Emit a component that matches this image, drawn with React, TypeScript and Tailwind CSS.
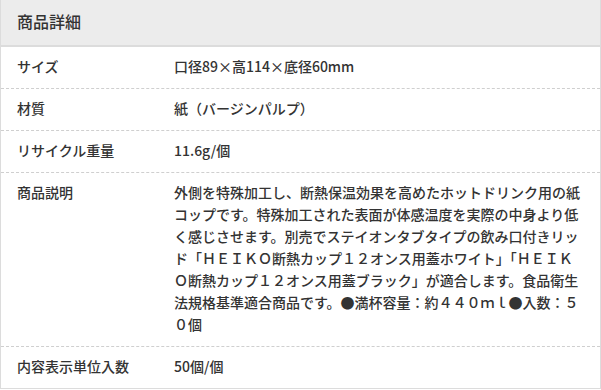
const rows: { label: string; value: string }[] = [
  { label: "サイズ", value: "口径89×高114×底径60mm" },
  { label: "材質", value: "紙（バージンパルプ）" },
  { label: "リサイクル重量", value: "11.6g/個" },
  {
    label: "商品説明",
    value:
      "外側を特殊加工し、断熱保温効果を高めたホットドリンク用の紙コップです。特殊加工された表面が体感温度を実際の中身より低く感じさせます。別売でステイオンタブタイプの飲み口付きリッド「ＨＥＩＫＯ断熱カップ１２オンス用蓋ホワイト」「ＨＥＩＫＯ断熱カップ１２オンス用蓋ブラック」が適合します。食品衛生法規格基準適合商品です。●満杯容量：約４４０ｍｌ●入数：５０個",
  },
  { label: "内容表示単位入数", value: "50個/個" },
]

export default function App() {
  return (
    <div className="w-[601px] bg-white font-['Noto_Sans_CJK_JP',sans-serif] font-medium text-[#333]">
      <div className="border-x border-b border-[#dcdcdc]">
        <div className="flex h-[47px] items-start border-b-2 border-[#dcdcdc] bg-[#ececec] px-4 pt-[10px] text-[16px] leading-[22px]">
          商品詳細
        </div>
        {rows.map((row, i) => (
          <div
            key={row.label}
            className={`grid grid-cols-[157px_1fr] text-sm leading-[22px] ${
              i < rows.length - 1 ? "border-b border-dashed border-[#cfcfcf]" : ""
            }`}
          >
            <div className="pt-[8px] pb-[11px] pl-4">{row.label}</div>
            <div className="pt-[8px] pb-[11px] pl-4 pr-4">{row.value}</div>
          </div>
        ))}
      </div>
    </div>
  )
}
